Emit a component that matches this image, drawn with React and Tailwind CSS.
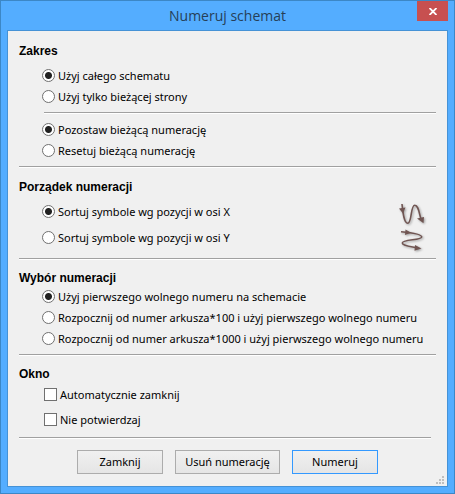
import React from 'react';

function Divider({ className = '' }) {
  return <hr className={`h-0.5 border-0 border-t border-b border-t-[#a0a0a0] border-b-white ${className}`} />;
}

function Heading({ children }) {
  return (
    <h2 className="h-4 font-['Liberation_Sans',Arial,sans-serif] text-xs leading-4 font-bold text-black">
      {children}
    </h2>
  );
}

function Radio({ name, label, defaultChecked }) {
  return (
    <label className="flex h-[21px] items-center gap-[3px] whitespace-nowrap">
      <input
        type="radio"
        name={name}
        defaultChecked={defaultChecked}
        className="size-[13px] shrink-0 appearance-none rounded-full border border-[#707070] bg-white checked:bg-[radial-gradient(circle,#212121_3px,#ffffff_4px)]"
      />
      <span>{label}</span>
    </label>
  );
}

function Checkbox({ label }) {
  return (
    <label className="flex h-[21px] items-center gap-[3px] whitespace-nowrap">
      <input
        type="checkbox"
        className="size-[13px] shrink-0 appearance-none border border-[#707070] bg-white checked:bg-[#212121]"
      />
      <span>{label}</span>
    </label>
  );
}

function Button({ className, children }) {
  return (
    <button
      type="button"
      className={`h-6 border bg-linear-to-b from-[#f0f0f0] to-[#e5e5e5] text-center whitespace-nowrap ${className}`}
    >
      {children}
    </button>
  );
}

function SortArrows() {
  return (
    <svg
      width="30"
      height="50"
      viewBox="0 0 30 50"
      fill="none"
      stroke="#705552"
      strokeWidth="1.6"
      className="drop-shadow-[1px_1px_1px_rgba(0,0,0,0.35)]"
      aria-hidden="true"
    >
      <path d="M4 3 C5 12 6 22.300 9.700 22.300 C14 22.300 12.500 4.300 16.700 4.300 C20.500 4.300 21 12 23 18" />
      <path d="M1 7.500 L7.500 6.500 L5 12.500Z" fill="#705552" stroke="none" />
      <path d="M19 17.500 L26 16 L25.500 22.300Z" fill="#705552" stroke="none" />
      <path d="M3 30.700 C12 31.500 23.700 33 23.700 36 C23.700 39.500 4.300 38 4.300 42 C4.300 45 13 45.500 19 46.700" />
      <path d="M7.500 28.500 L13 31.700 L7 34Z" fill="#705552" stroke="none" />
      <path d="M17 44 L23.500 47.500 L16.500 49.700Z" fill="#705552" stroke="none" />
    </svg>
  );
}

export default function App() {
  return (
    <div className="min-h-screen border border-[#3c87c6] bg-[#54adff] px-1.5 pb-1.5 font-['Noto_Sans','Open_Sans',sans-serif] text-[11px] leading-4 text-black">
      <header className="grid h-[29px] grid-cols-[31px_1fr_31px] items-start">
        <h1 className="col-start-2 text-center font-['Open_Sans','Noto_Sans',sans-serif] text-sm leading-[29px] text-[#263f57]">
          Numeruj schemat
        </h1>
        <button type="button" aria-label="Zamknij okno" className="flex h-5 items-center justify-center bg-[#c75050]">
          <svg width="8" height="7" viewBox="0 0 8 7" stroke="#ffffff" strokeWidth="1.8" aria-hidden="true">
            <path d="M0.500 0 L7.500 7 M7.500 0 L0.500 7" />
          </svg>
        </button>
      </header>

      <main className="relative border border-[#4592d6] bg-[#f0f0f0] px-[11px] pb-3">
        <section className="pt-3">
          <Heading>Zakres</Heading>
          <div className="mt-1.5 pl-[23px]">
            <Radio name="scope" label="Użyj całego schematu" defaultChecked />
            <Radio name="scope" label="Użyj tylko bieżącej strony" />
          </div>
          <Divider className="my-[5px] ml-[25px]" />
          <div className="pl-[23px]">
            <Radio name="existing" label="Pozostaw bieżącą numerację" defaultChecked />
            <Radio name="existing" label="Resetuj bieżącą numerację" />
          </div>
          <Divider className="mt-[5px]" />
        </section>

        <section className="pt-[11px]">
          <Heading>Porządek numeracji</Heading>
          <div className="mt-1.5 flex h-[57px] justify-between pr-2 pl-[23px]">
            <div className="flex flex-col gap-[5px]">
              <Radio name="order" label="Sortuj symbole wg pozycji w osi X" defaultChecked />
              <Radio name="order" label="Sortuj symbole wg pozycji w osi Y" />
            </div>
            <SortArrows />
          </div>
          <Divider />
        </section>

        <section className="pt-2.5">
          <Heading>Wybór numeracji</Heading>
          <div className="pl-[23px]">
            <Radio name="choice" label="Użyj pierwszego wolnego numeru na schemacie" defaultChecked />
            <Radio name="choice" label="Rozpocznij od numer arkusza*100 i użyj pierwszego wolnego numeru" />
            <Radio name="choice" label="Rozpocznij od numer arkusza*1000 i użyj pierwszego wolnego numeru" />
          </div>
          <Divider className="mt-[5px]" />
        </section>

        <section className="pt-2.5">
          <Heading>Okno</Heading>
          <div className="mt-0.5 flex flex-col gap-1 pl-[25px]">
            <Checkbox label="Automatycznie zamknij" />
            <Checkbox label="Nie potwierdzaj" />
          </div>
          <Divider className="mt-[7px] mr-[5px]" />
        </section>

        <footer className="mt-[11px] flex justify-center gap-3">
          <Button className="w-[86px] border-[#acacac]">Zamknij</Button>
          <Button className="w-[105px] border-[#acacac]">Usuń numerację</Button>
          <Button className="w-[86px] border-[#3399ff]">Numeruj</Button>
        </footer>

        <svg
          width="8"
          height="8"
          viewBox="0 0 8 8"
          fill="#bfbfbf"
          shapeRendering="crispEdges"
          className="absolute right-[3px] bottom-0.5"
          aria-hidden="true"
        >
          <path d="M6 0h2v2h-2z M3 3h2v2h-2z M6 3h2v2h-2z M0 6h2v2h-2z M3 6h2v2h-2z M6 6h2v2h-2z" />
        </svg>
      </main>
    </div>
  );
}
